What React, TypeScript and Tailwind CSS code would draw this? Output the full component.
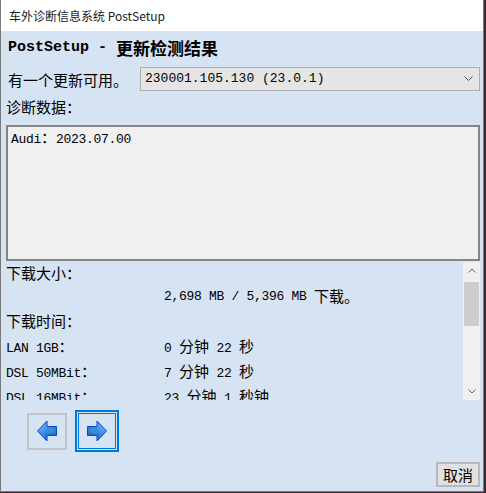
import React from "react";

const MONO = "font-[family-name:'Liberation_Mono','Noto_Sans_CJK_SC',monospace]";
const CJK = "font-[family-name:'Noto_Sans_CJK_SC','Liberation_Sans',sans-serif]";

function Mixed({ text, bold = false }: { text: string; bold?: boolean }) {
  const parts = text.split(/([\u3000-\u9fff\uff00-\uffef]+)/).filter((p) => p.length > 0);
  return (
    <>
      {parts.map((p, i) =>
        /[\u3000-\u9fff\uff00-\uffef]/.test(p) ? (
          <span key={i} className={`${CJK} text-[15px] ${bold ? "font-bold" : ""}`}>
            {p}
          </span>
        ) : (
          <span key={i} className={`${MONO} text-[13px] tracking-[-0.3px] whitespace-pre ${bold ? "font-bold" : ""}`}>
            {p}
          </span>
        )
      )}
    </>
  );
}

function Arrow({ dir }: { dir: "left" | "right" }) {
  const id = `g-${dir}`;
  return (
    <svg width="20" height="22" viewBox="0 0 20 22" className={dir === "right" ? "-scale-x-100" : ""}>
      <defs>
        <linearGradient id={id} x1="0" y1="0" x2="1" y2="1">
          <stop offset="0" stopColor="#8cd0ff" />
          <stop offset="0.45" stopColor="#3b8ee8" />
          <stop offset="1" stopColor="#1a4fc0" />
        </linearGradient>
      </defs>
      <polygon
        points="0.5,11 10,1 10,6.5 19.5,6.5 19.5,15.5 10,15.5 10,21"
        fill={`url(#${id})`}
        stroke="#0a46c8"
        strokeWidth="1"
        strokeLinejoin="miter"
      />
      <rect x="10" y="9" width="8" height="4" fill="#3aa0b8" opacity="0.55" />
    </svg>
  );
}

export default function App() {
  const rows: [string, string][] = [
    ["LAN 1GB：", "0 分钟 22 秒"],
    ["DSL 50MBit：", "7 分钟 22 秒"],
    ["DSL 16MBit：", "23 分钟 1 秒钟"],
  ];
  return (
    <div className="w-[486px] h-[493px] bg-[#3b2a2f] overflow-hidden">
      <div className="w-[484px] h-[492px] flex flex-col bg-[#d6e3f2] border-l border-r border-b border-[#7a7a7a] text-black">
        {/* title bar */}
        <div className={`h-[31px] shrink-0 bg-white flex items-center pl-[8px] text-[12px] ${CJK} text-[#1a1a1a]`}>
          车外诊断信息系统 PostSetup
        </div>

        {/* header */}
        <div className="h-[32px] shrink-0 flex items-center pl-[7px] leading-none">
          <span className={`${MONO} text-[15px] font-bold whitespace-pre`}>PostSetup - </span>
          <span className={`${CJK} text-[17px] font-bold`}>更新检测结果</span>
        </div>

        {/* update row */}
        <div className="h-[32px] shrink-0 flex items-center">
          <span className={`${CJK} text-[15px] pl-[7px] w-[139px] leading-none`}>有一个更新可用。</span>
          <div className="w-[340px] h-[24px] bg-[#e5e5e5] border border-[#adadad] flex items-center pl-[4px] pr-[6px]">
            <span className={`${MONO} text-[13px] whitespace-pre flex-1`}>230001.105.130 (23.0.1)</span>
            <svg width="9" height="6" viewBox="0 0 9 6">
              <polyline points="0.5,0.5 4.5,4.5 8.5,0.5" fill="none" stroke="#555" strokeWidth="1" />
            </svg>
          </div>
        </div>

        {/* label */}
        <div className={`h-[30px] shrink-0 pl-[5px] ${CJK} text-[15px] leading-[24px]`}>诊断数据：</div>

        {/* text area */}
        <div className="h-[136px] shrink-0 ml-[5px] w-[474px] bg-[#f0f0f0] border-2 border-[#858585] pl-[3px] pt-[1px] leading-[18px]">
          <Mixed text="Audi：2023.07.00" />
        </div>

        {/* scroll panel */}
        <div className="h-[138px] shrink-0 mt-[1px] w-[479px] flex overflow-hidden">
          <div className="flex-1 overflow-hidden pl-[5px]">
            <div className="flex flex-col">
              <div className="h-[22px] flex items-center">
                <Mixed text="下载大小：" />
              </div>
              <div className="h-[25px] flex items-center pl-[158px]">
                <Mixed text="2,698 MB / 5,396 MB 下载。" />
              </div>
              <div className="h-[25px] flex items-center">
                <Mixed text="下载时间：" />
              </div>
              {rows.map(([a, b]) => (
                <div key={a} className="h-[25px] shrink-0 flex items-center">
                  <div className="w-[158px] shrink-0">
                    <Mixed text={a} />
                  </div>
                  <div>
                    <Mixed text={b} />
                  </div>
                </div>
              ))}
            </div>
          </div>
          <div className="w-[17px] shrink-0 bg-[#f0f0f0] flex flex-col items-center">
            <div className="h-[17px] w-full flex items-center justify-center">
              <svg width="8" height="5" viewBox="0 0 8 5">
                <polyline points="0.5,4.5 4,1 7.5,4.5" fill="none" stroke="#606060" strokeWidth="1" />
              </svg>
            </div>
            <div className="mt-[3px] h-[44px] w-[15px] bg-[#cdcdcd]" />
            <div className="flex-1" />
            <div className="h-[17px] w-full flex items-center justify-center">
              <svg width="8" height="5" viewBox="0 0 8 5">
                <polyline points="0.5,0.5 4,4 7.5,0.5" fill="none" stroke="#606060" strokeWidth="1" />
              </svg>
            </div>
          </div>
        </div>

        {/* bottom area */}
        <div className="flex-1 flex flex-col">
          <div className="h-[42px] mt-[10px] flex items-center pl-[26px] gap-[8px]">
            <div className="w-[40px] h-[37px] border-2 border-[#c4c4c4] flex items-center justify-center">
              <Arrow dir="left" />
            </div>
            <div className="w-[44px] h-[42px] border-2 border-[#0078d7] p-[1px]">
              <div className="w-full h-full border border-[#0078d7] flex items-center justify-center">
                <Arrow dir="right" />
              </div>
            </div>
          </div>
          <div className="flex-1" />
          <div className="self-end mr-[3px] mb-[4px] w-[44px] h-[25px] border-2 border-[#b8b8b8] bg-[#e1e1e1] flex items-center justify-center">
            <span className={`${CJK} text-[15px] leading-none`}>取消</span>
          </div>
        </div>
      </div>
    </div>
  );
}
